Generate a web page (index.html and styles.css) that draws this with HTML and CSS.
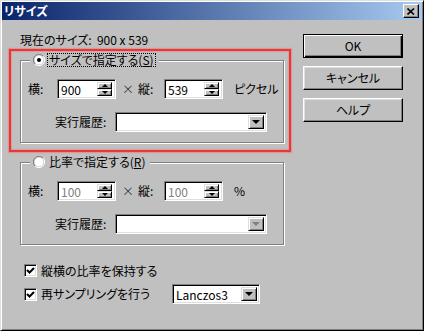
FILE: index.html
```html
<!DOCTYPE html>
<html>
<head>
    <meta charset="UTF-8">
    <title>リサイズ</title>
    <link rel="stylesheet" href="styles.css">
</head>
<body>
    <div class="window">
        <div class="titlebar">
            <span class="title">リサイズ</span>
            <span class="close-btn">
                <svg width="8" height="7" viewBox="0 0 8 7"><path d="M0.5 0.5 L7 6.5 M7 0.5 L0.5 6.5" stroke="#000" stroke-width="1.6"/></svg>
            </span>
        </div>

        <div class="client">
            <div class="main">
                <div class="current">現在のサイズ: &nbsp;900 x 539</div>

                <!-- size group, highlighted -->
                <div class="highlight">
                    <div class="group">
                        <div class="legend">
                            <svg class="radio" width="12" height="12" viewBox="0 0 12 12">
                                <path d="M10 2 A5.5 5.5 0 0 0 2 10" stroke="#808080" fill="none"/>
                                <path d="M2 10 A5.5 5.5 0 0 0 10 2" stroke="#fff" fill="none"/>
                                <circle cx="6" cy="6" r="4.5" fill="#fff"/>
                                <circle cx="6" cy="6" r="2" fill="#000"/>
                            </svg>
                            <span class="legend-text focus">サイズで指定する(<u>S</u>)</span>
                        </div>
                        <div class="row">
                            <span class="lbl">横:</span>
                            <div class="field spin">
                                <span class="val">900</span>
                                <span class="spin-btns"><span class="sb"><i class="up"></i></span><span class="sb"><i class="down"></i></span></span>
                            </div>
                            <span class="times">×</span>
                            <span class="lbl2">縦:</span>
                            <div class="field spin">
                                <span class="val">539</span>
                                <span class="spin-btns"><span class="sb"><i class="up"></i></span><span class="sb"><i class="down"></i></span></span>
                            </div>
                            <span class="unit">ピクセル</span>
                        </div>
                        <div class="row row-history">
                            <span class="lbl-history">実行履歴:</span>
                            <div class="field combo">
                                <span class="val"></span>
                                <span class="drop"><i class="down"></i></span>
                            </div>
                        </div>
                    </div>
                </div>

                <!-- ratio group, disabled -->
                <div class="group group-ratio">
                    <div class="legend">
                        <svg class="radio" width="12" height="12" viewBox="0 0 12 12">
                            <path d="M10 2 A5.5 5.5 0 0 0 2 10" stroke="#808080" fill="none"/>
                            <path d="M2 10 A5.5 5.5 0 0 0 10 2" stroke="#fff" fill="none"/>
                            <circle cx="6" cy="6" r="4.5" fill="#fff"/>
                        </svg>
                        <span class="legend-text">比率で指定する(<u>R</u>)</span>
                    </div>
                    <div class="row">
                        <span class="lbl">横:</span>
                        <div class="field spin">
                            <span class="val disabled">100</span>
                            <span class="spin-btns"><span class="sb"><i class="up"></i></span><span class="sb"><i class="down"></i></span></span>
                        </div>
                        <span class="times">×</span>
                        <span class="lbl2">縦:</span>
                        <div class="field spin">
                            <span class="val disabled">100</span>
                            <span class="spin-btns"><span class="sb"><i class="up"></i></span><span class="sb"><i class="down"></i></span></span>
                        </div>
                        <span class="unit">%</span>
                    </div>
                    <div class="row row-history">
                        <span class="lbl-history">実行履歴:</span>
                        <div class="field combo">
                            <span class="val"></span>
                            <span class="drop"><i class="down gray"></i></span>
                        </div>
                    </div>
                </div>

                <div class="check-row first">
                    <span class="cb"><svg width="9" height="9" viewBox="0 0 9 9"><path d="M1 4 L3.5 6.5 L8 2" stroke="#000" stroke-width="2" fill="none"/></svg></span>
                    <span>縦横の比率を保持する</span>
                </div>
                <div class="check-row second">
                    <span class="cb"><svg width="9" height="9" viewBox="0 0 9 9"><path d="M1 4 L3.5 6.5 L8 2" stroke="#000" stroke-width="2" fill="none"/></svg></span>
                    <span class="check-text">再サンプリングを行う</span>
                    <div class="field combo combo-small">
                        <span class="val">Lanczos3</span>
                        <span class="drop"><i class="down"></i></span>
                    </div>
                </div>
            </div>

            <div class="buttons">
                <div class="btn btn-default">OK</div>
                <div class="btn">キャンセル</div>
                <div class="btn">ヘルプ</div>
            </div>
        </div>
    </div>
</body>
</html>
```

FILE: styles.css
```css
body {
    margin: 0;
    padding: 0;
    background-color: #c0c0c0;
    font-family: "Noto Sans CJK JP", sans-serif;
    font-size: 12px;
    font-feature-settings: "palt";
    line-height: 14px;
    color: #000;
    overflow: hidden;
}

.window {
    width: 424px;
    height: 331px;
    box-sizing: border-box;
    padding: 1px;
    border: 1px solid;
    border-color: #dfdfdf #000 #000 #dfdfdf;
    box-shadow: inset 1px 1px #fff, inset -1px -1px #808080;
    background-color: #c0c0c0;
}

.titlebar {
    height: 18px;
    display: flex;
    align-items: center;
    justify-content: space-between;
    padding: 0 3px 0 2px;
    background: linear-gradient(to right, #0a246a, #a6caf0);
}

.title {
    color: #fff;
    font-weight: bold;
}

.close-btn {
    width: 16px;
    height: 14px;
    box-sizing: border-box;
    display: flex;
    align-items: center;
    justify-content: center;
    background-color: #c0c0c0;
    border: 1px solid;
    border-color: #fff #000 #000 #fff;
    box-shadow: inset -1px -1px #808080;
}

.client {
    display: flex;
    height: 309px;
}

.main {
    width: 282px;
    padding-left: 7px;
}

.current {
    margin: 13px 0 2px 11px;
}

.highlight {
    width: 282px;
    height: 103px;
    box-sizing: border-box;
    padding: 9px 5px 0 9px;
    border: 2px solid #e23a3a;
    box-shadow: 0 0 1px 1px rgba(240, 130, 130, 0.7), inset 0 0 1px 1px rgba(240, 130, 130, 0.6);
}

/* etched group box */
.group {
    position: relative;
    width: 264px;
    height: 83px;
    box-sizing: border-box;
    padding: 18px 0 0 7px;
    border: 1px solid #808080;
    box-shadow: inset 1px 1px #fff, 1px 1px #fff;
}

.group-ratio {
    margin: 10px 0 0 11px;
}

.legend {
    position: absolute;
    left: 9px;
    top: -8px;
    display: flex;
    align-items: center;
    gap: 2px;
    padding: 0 3px 0 3px;
    height: 14px;
    background-color: #c0c0c0;
}

.legend-text {
    padding: 0 1px;
    border: 1px dotted transparent;
    line-height: 12px;
}

.legend-text.focus {
    border-color: #000;
}

.row {
    display: flex;
    align-items: center;
    height: 20px;
}

.row-history {
    margin-top: 13px;
    padding-left: 27px;
}

.lbl {
    width: 29px;
}

.times {
    width: 22px;
    box-sizing: border-box;
    padding-right: 4px;
    text-align: right;
    font-weight: 300;
}

.lbl2 {
    width: 26px;
}

.unit {
    margin-left: 11px;
}

.lbl-history {
    width: 60px;
}

/* sunken edit field */
.field {
    height: 20px;
    box-sizing: border-box;
    display: flex;
    padding: 2px;
    border: 1px solid;
    border-color: #808080 #fff #fff #808080;
    box-shadow: inset 1px 1px #000, inset -1px -1px #dfdfdf;
    background-color: #fff;
}

.val {
    flex: 1;
    padding-left: 1px;
    line-height: 16px;
}

.val.disabled {
    color: #808080;
}

.spin {
    width: 59px;
}

.spin-btns {
    width: 15px;
    display: flex;
    flex-direction: column;
    margin-right: 1px;
}

.sb,
.drop {
    box-sizing: border-box;
    display: flex;
    align-items: center;
    justify-content: center;
    background-color: #c0c0c0;
    border: 1px solid;
    border-color: #dfdfdf #000 #000 #dfdfdf;
    box-shadow: inset 1px 1px #fff, inset -1px -1px #808080;
}

.sb {
    height: 8px;
}

.drop {
    width: 16px;
}

i.up,
i.down {
    width: 0;
    height: 0;
    border-left: 3px solid transparent;
    border-right: 3px solid transparent;
}

i.up {
    border-bottom: 3px solid #000;
}

.sb i.down {
    border-top: 3px solid #000;
}

.drop i.down {
    border-left-width: 4px;
    border-right-width: 4px;
    border-top: 4px solid #000;
}

.drop i.down.gray {
    border-top-color: #808080;
}

.combo {
    width: 152px;
}

.check-row {
    display: flex;
    align-items: center;
    padding-left: 15px;
}

.check-row.first {
    margin-top: 19px;
    height: 13px;
}

.check-row.second {
    margin-top: 7px;
    height: 20px;
}

.cb {
    width: 13px;
    height: 13px;
    box-sizing: border-box;
    display: flex;
    align-items: center;
    justify-content: center;
    margin-right: 4px;
    border: 1px solid;
    border-color: #808080 #fff #fff #808080;
    box-shadow: inset 1px 1px #000, inset -1px -1px #dfdfdf;
    background-color: #fff;
}

.check-text {
    width: 131px;
}

.combo-small {
    width: 88px;
}

.buttons {
    display: flex;
    flex-direction: column;
    gap: 8px;
    padding-top: 14px;
    margin-left: 12px;
}

.btn {
    width: 100px;
    height: 24px;
    box-sizing: border-box;
    display: flex;
    align-items: center;
    justify-content: center;
    background-color: #c0c0c0;
    border: 1px solid;
    border-color: #fff #000 #000 #fff;
    box-shadow: inset -1px -1px #808080, inset 1px 1px #dfdfdf;
}

.btn-default {
    border-color: #000;
    box-shadow: inset 1px 1px #fff, inset -1px -1px #000, inset -2px -2px #808080;
}
```
